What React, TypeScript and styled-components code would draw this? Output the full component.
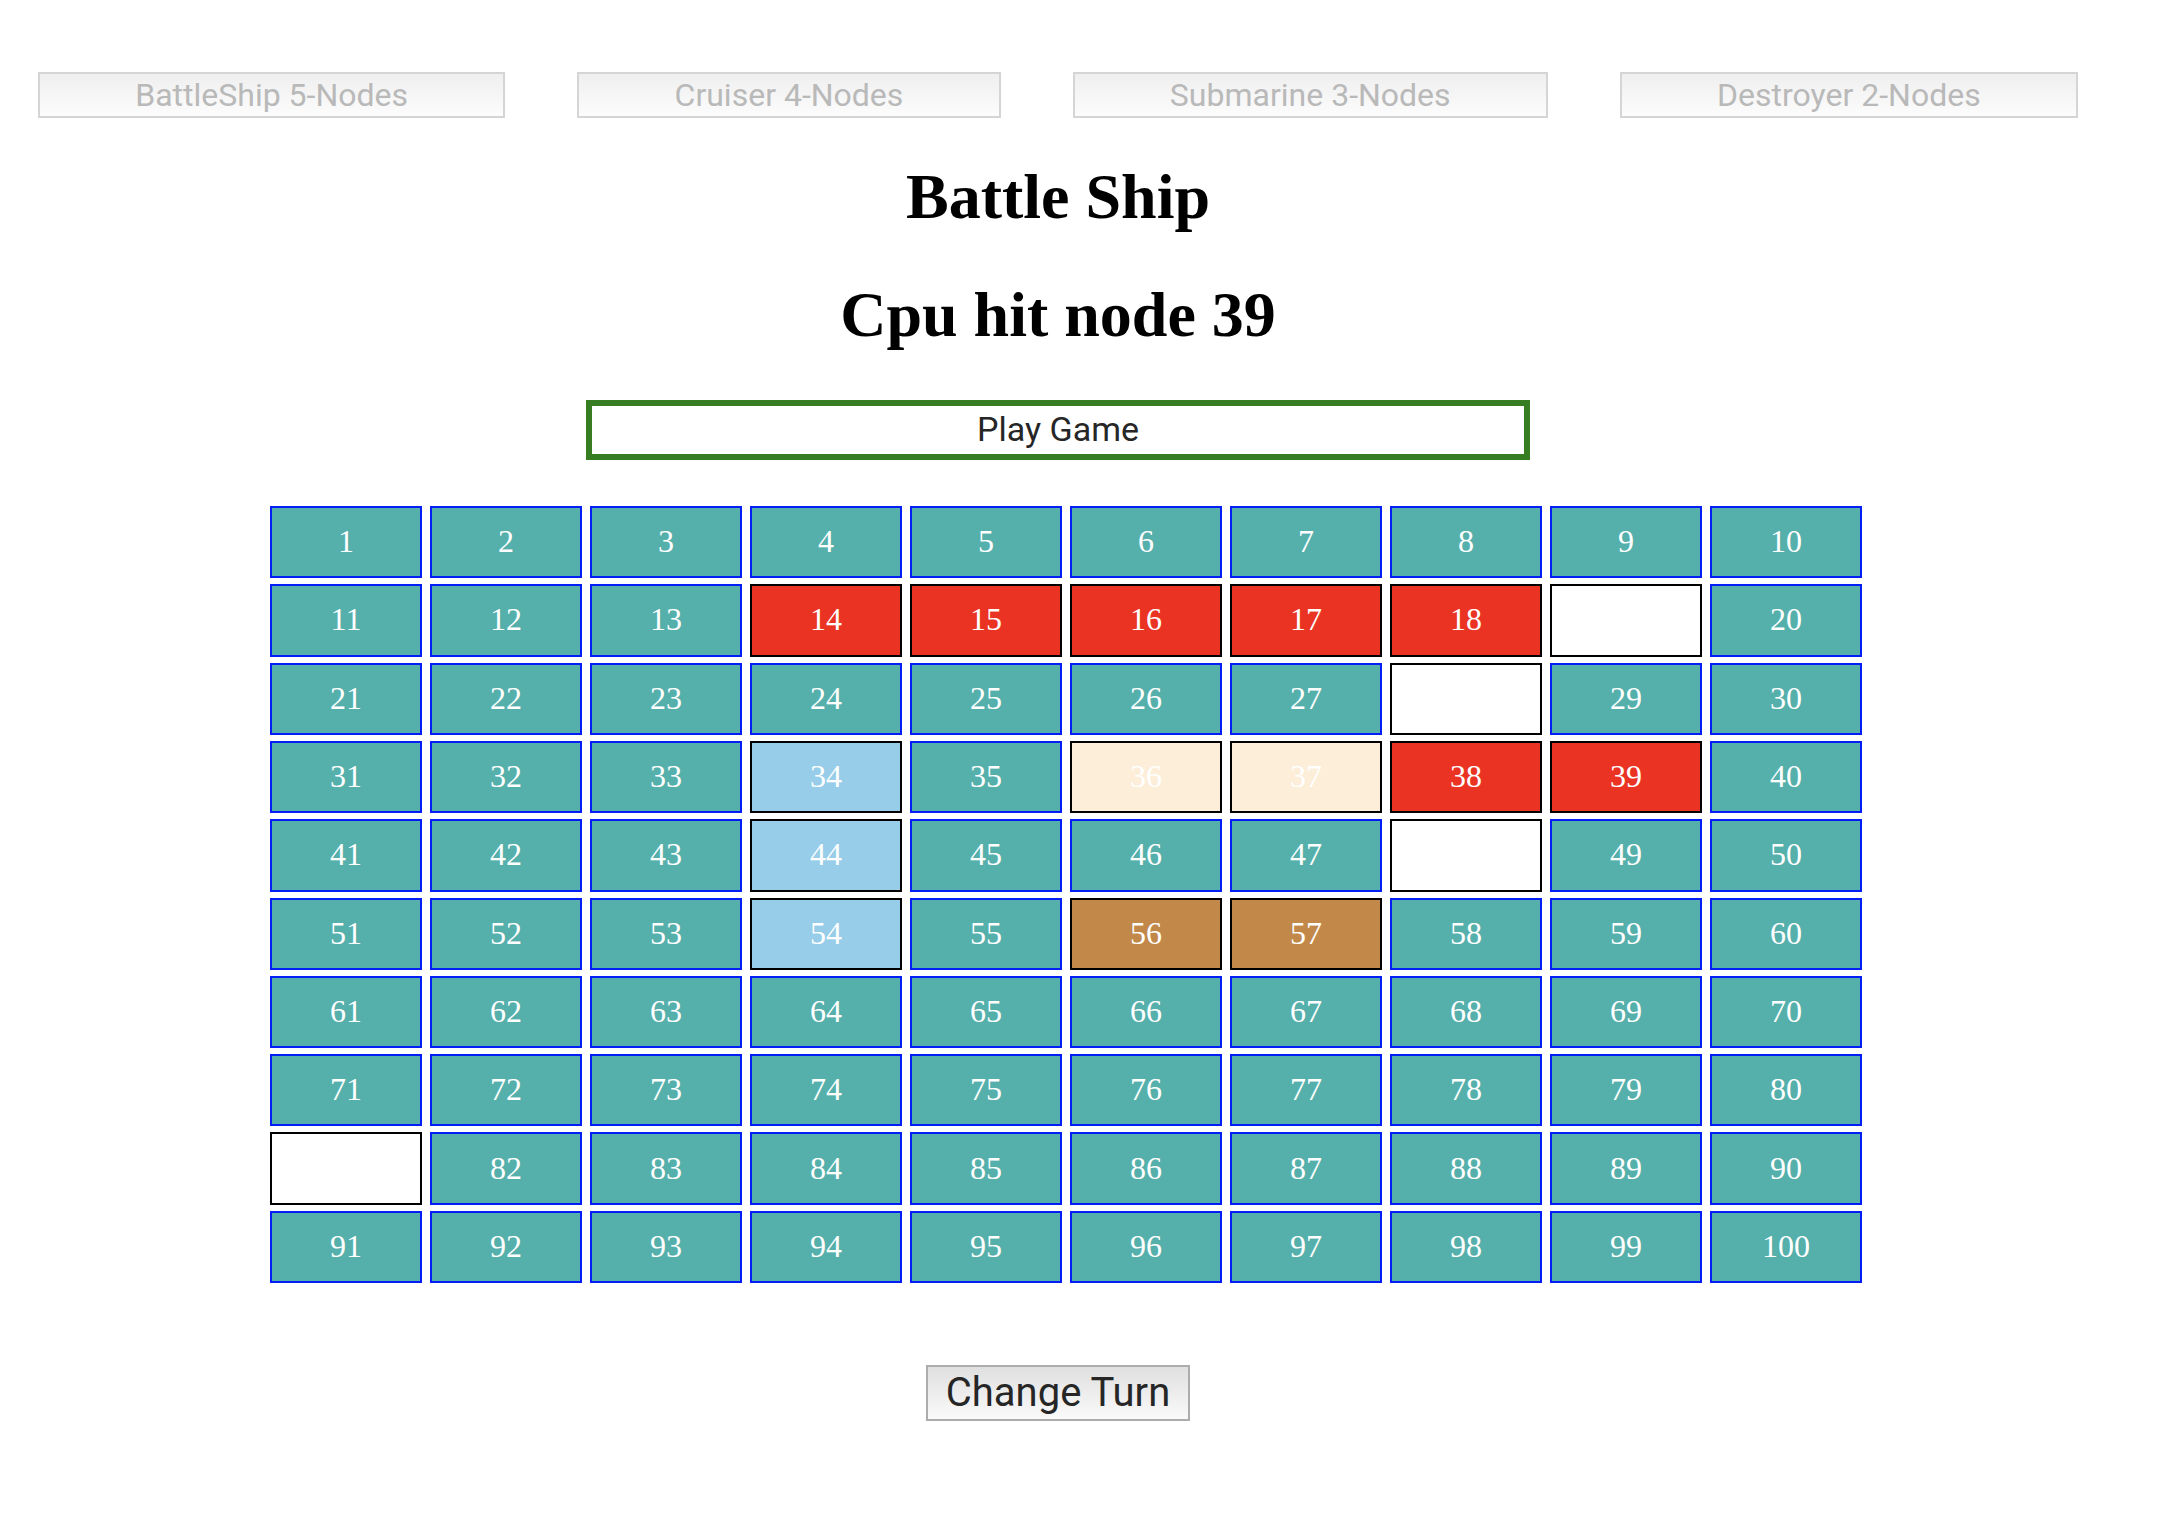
import React, { useState } from "react";
import styled, { createGlobalStyle } from "styled-components";

const GlobalStyle = createGlobalStyle`
  *, *::before, *::after { box-sizing: border-box; }
  body {
    margin: 0;
    background: #ffffff;
    color: #000000;
    font-family: "Liberation Serif", "Times New Roman", serif;
  }
`;

const sans = `Roboto, Inter, sans-serif`;

const Page = styled.main`
  display: flex;
  flex-direction: column;
  align-items: center;
  padding: 72px 104px 72px 38px;
`;

const Fleet = styled.nav`
  display: flex;
  align-self: stretch;
  gap: 72px;
  margin-bottom: 42px;
`;

const ShipButton = styled.button`
  flex: 1 1 auto;
  height: 46px;
  padding: 0 12px;
  border: 2px solid #d5d5d5;
  background: linear-gradient(#efefef, #fcfcfc);
  color: #b9b9b9;
  font: 400 32px/40px ${sans};
  white-space: nowrap;
`;

const Headline = styled.h1`
  margin: 0 0 44px;
  font-size: 64px;
  line-height: 74px;
  font-weight: 700;
  text-align: center;
`;

const PlayButton = styled.button`
  width: 944px;
  max-width: 100%;
  height: 60px;
  margin-top: 4px;
  padding: 0 0 2px;
  border: 6px solid #377e22;
  background: #ffffff;
  color: #262626;
  font: 400 34px/44px ${sans};
  cursor: pointer;
`;

const Board = styled.section`
  display: grid;
  align-self: stretch;
  grid-template-columns: repeat(10, 1fr);
  grid-template-rows: repeat(10, 1fr);
  gap: 6px 8px;
  min-height: 777px;
  margin: 46px 216px 82px 232px;
`;

type State = "water" | "hit" | "miss" | "submarine" | "cruiser" | "destroyer";

const fills: Record<State, string> = {
  water: "#55b0ac",
  hit: "#ea3323",
  miss: "#ffffff",
  submarine: "#97cde9",
  cruiser: "#fdeed9",
  destroyer: "#c28849",
};

const Node = styled.button<{ $state: State }>`
  min-width: 0;
  padding: 0 0 2px;
  border: 2px solid ${({ $state }) => ($state === "water" ? "#001ef5" : "#000000")};
  background: ${({ $state }) => fills[$state]};
  color: #ffffff;
  font: 400 32px/36px "Liberation Serif", "Times New Roman", serif;
  cursor: pointer;
`;

const TurnButton = styled.button`
  height: 56px;
  padding: 0 18px;
  border: 2px solid #acacac;
  background: linear-gradient(#e0e0e0, #fafafa);
  color: #262626;
  font: 400 40px/48px ${sans};
  cursor: pointer;
`;

const ships = [
  "BattleShip 5-Nodes",
  "Cruiser 4-Nodes",
  "Submarine 3-Nodes",
  "Destroyer 2-Nodes",
];

const marks: Record<number, State> = {
  14: "hit", 15: "hit", 16: "hit", 17: "hit", 18: "hit", 38: "hit", 39: "hit",
  19: "miss", 28: "miss", 48: "miss", 81: "miss",
  34: "submarine", 44: "submarine", 54: "submarine",
  36: "cruiser", 37: "cruiser",
  56: "destroyer", 57: "destroyer",
};

const nodes = Array.from({ length: 100 }, (_, i) => i + 1);

export default function App() {
  const [lastHit] = useState(39);

  return (
    <>
      <GlobalStyle />
      <Page>
        <Fleet>
          {ships.map((ship) => (
            <ShipButton key={ship} type="button" disabled>
              {ship}
            </ShipButton>
          ))}
        </Fleet>
        <Headline>Battle Ship</Headline>
        <Headline as="h2">Cpu hit node {lastHit}</Headline>
        <PlayButton type="button">Play Game</PlayButton>
        <Board aria-label="Board">
          {nodes.map((n) => {
            const state = marks[n] ?? "water";
            return (
              <Node key={n} type="button" $state={state} aria-label={`Node ${n}`}>
                {state === "miss" ? null : n}
              </Node>
            );
          })}
        </Board>
        <TurnButton type="button">Change Turn</TurnButton>
      </Page>
    </>
  );
}
